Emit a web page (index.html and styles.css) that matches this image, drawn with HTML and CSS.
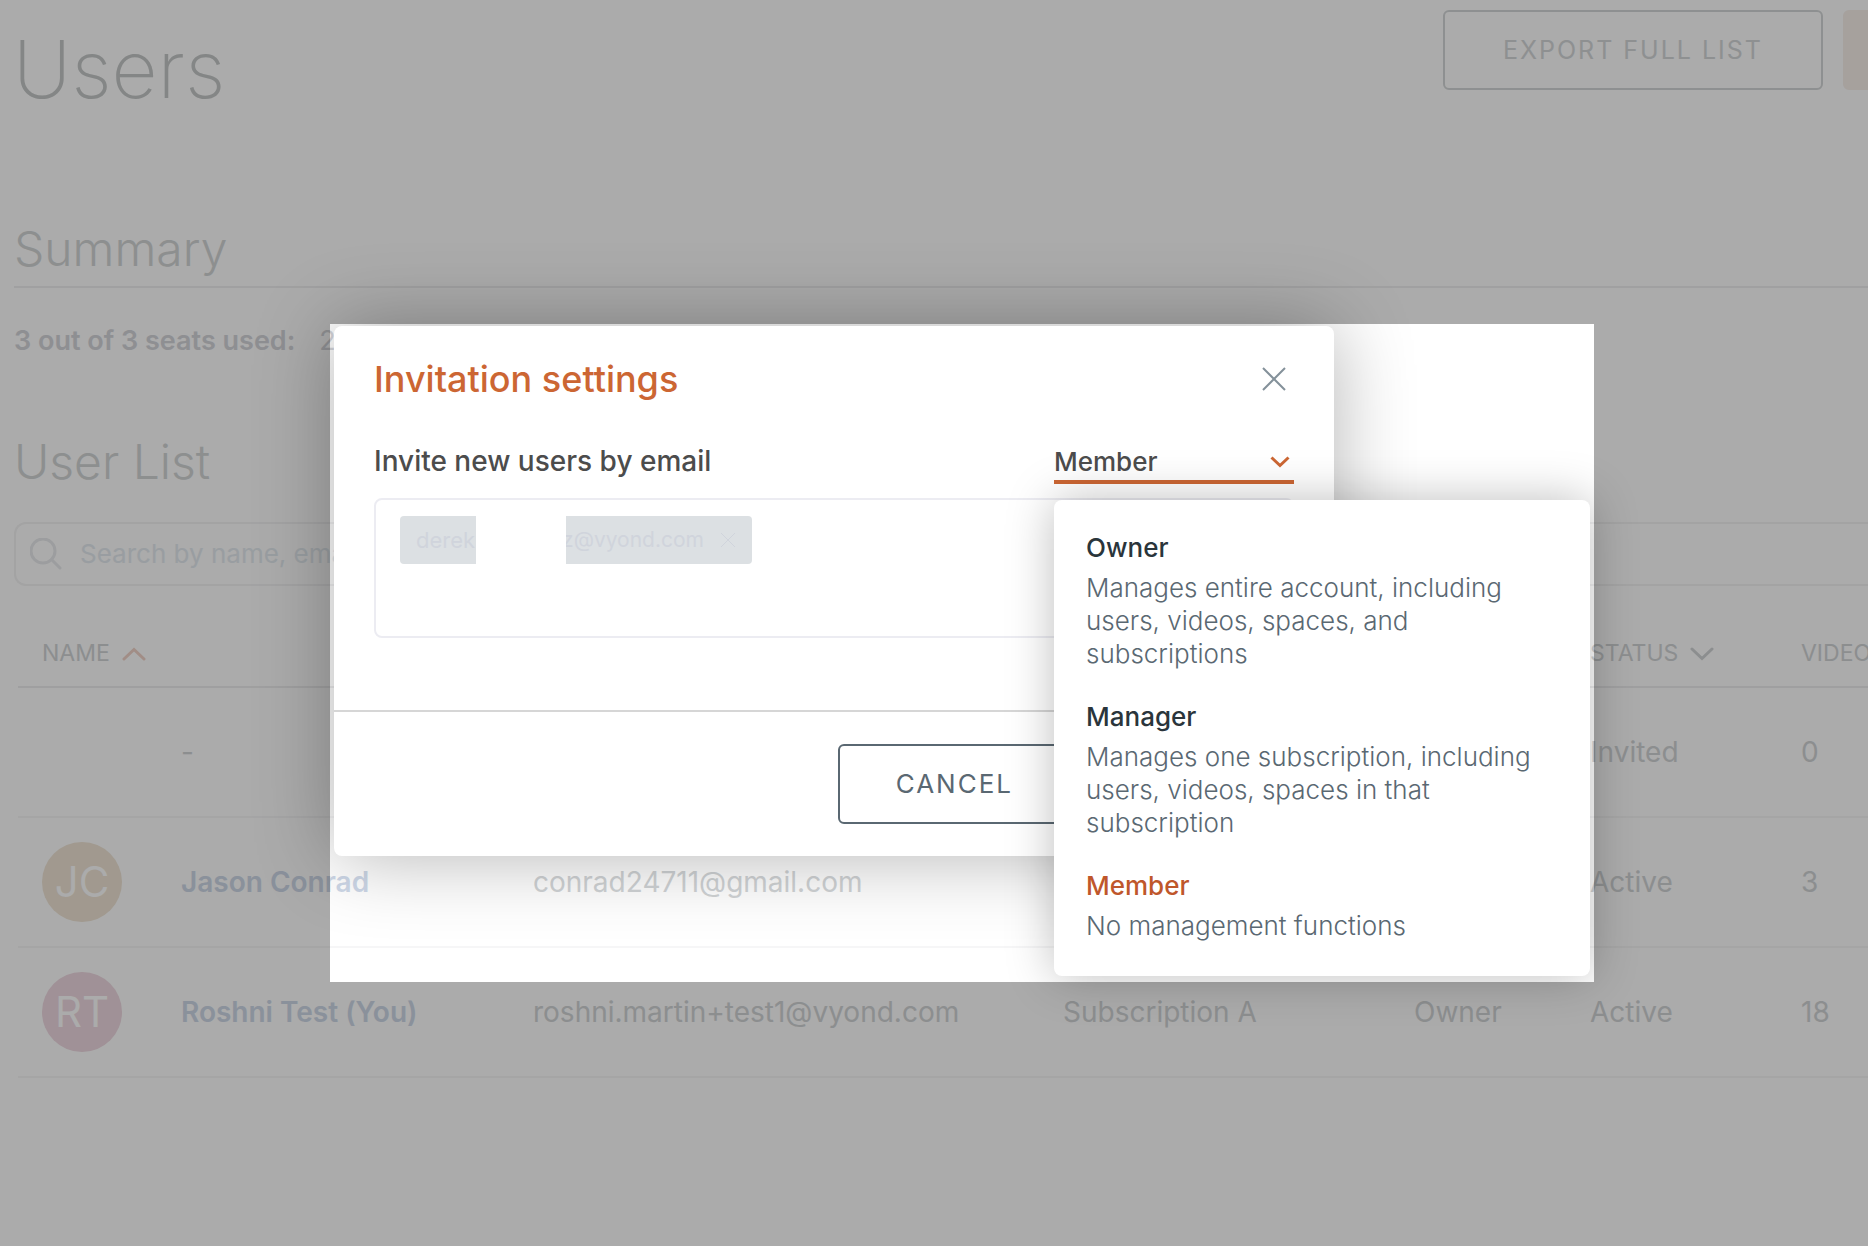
FILE: index.html
```html
<!DOCTYPE html>
<html lang="en">
<head>
<meta charset="utf-8">
<title>Users</title>
<link rel="stylesheet" href="styles.css">
</head>
<body>
<div class="page">
  <header class="header">
    <h1 class="title">Users</h1>
    <div class="actions">
      <button class="btn btn-muted" type="button">EXPORT FULL LIST</button>
      <button class="btn btn-accent" type="button" aria-label="Invite"></button>
    </div>
  </header>

  <main class="main">
    <h2 class="heading heading-ruled">Summary</h2>
    <p class="seats"><strong>3 out of 3 seats used:</strong><span>2</span></p>

    <h2 class="heading">User List</h2>
    <label class="search">
      <svg class="search-icon" viewBox="0 0 32 32" aria-hidden="true"><circle cx="13" cy="13" r="12"/><path d="M21.500 21.500 30 30"/></svg>
      <input class="search-input" type="search" placeholder="Search by name, email" aria-label="Search">
    </label>

    <table class="users">
      <colgroup><col class="col-name"><col class="col-email"><col class="col-plan"><col class="col-role"><col class="col-status"><col></colgroup>
      <thead>
        <tr>
          <th class="th-name">NAME<svg class="sort sort-on" viewBox="0 0 24 14" aria-hidden="true"><path d="M2 12 12 2.500 22 12"/></svg></th>
          <th></th><th></th><th></th>
          <th>STATUS<svg class="sort" viewBox="0 0 24 14" aria-hidden="true"><path d="M2 2 12 11.500 22 2"/></svg></th>
          <th>VIDEOS</th>
        </tr>
      </thead>
      <tbody>
        <tr>
          <td><div class="person"><span class="avatar"></span><span>-</span></div></td>
          <td></td><td></td><td></td><td>Invited</td><td>0</td>
        </tr>
        <tr>
          <td><div class="person"><span class="avatar avatar-sand">JC</span><a class="name" href="#jason">Jason Conrad</a></div></td>
          <td>conrad24711@gmail.com</td><td></td><td></td><td>Active</td><td>3</td>
        </tr>
        <tr>
          <td><div class="person"><span class="avatar avatar-pink">RT</span><a class="name" href="#roshni">Roshni Test (You)</a></div></td>
          <td>roshni.martin+test1@vyond.com</td><td>Subscription A</td><td>Owner</td><td>Active</td><td>18</td>
        </tr>
      </tbody>
    </table>
  </main>

  <section class="modal" role="dialog" aria-labelledby="modal-title">
    <div class="modal-head">
      <h2 class="modal-title" id="modal-title">Invitation settings</h2>
      <button class="close" type="button" aria-label="Close"><svg viewBox="0 0 24 24" aria-hidden="true"><path d="M1 1 23 23M23 1 1 23"/></svg></button>
    </div>
    <div class="modal-body">
      <div class="invite-row">
        <span class="invite-label" id="invite-label">Invite new users by email</span>
        <div class="role">
          <select class="role-select" aria-label="Role">
            <option>Owner</option>
            <option>Manager</option>
            <option selected>Member</option>
          </select>
          <svg class="role-arrow" viewBox="0 0 20 12" aria-hidden="true"><path d="M1.500 1.500 10 9.500 18.500 1.500"/></svg>
          <ul class="menu">
            <li><strong class="menu-name">Owner</strong><p class="menu-text">Manages entire account, including users, videos, spaces, and subscriptions</p></li>
            <li><strong class="menu-name">Manager</strong><p class="menu-text">Manages one subscription, including users, videos, spaces in that subscription</p></li>
            <li><strong class="menu-name menu-name-on">Member</strong><p class="menu-text">No management functions</p></li>
          </ul>
        </div>
      </div>
      <div class="emails" role="group" aria-labelledby="invite-label">
        <div class="chip">
          <span class="chip-start">derek</span>
          <span class="chip-end"><span>z@vyond.com</span><button class="chip-remove" type="button" aria-label="Remove"><svg viewBox="0 0 16 16" aria-hidden="true"><path d="M1 1 15 15M15 1 1 15"/></svg></button></span>
        </div>
      </div>
    </div>
    <footer class="modal-foot">
      <button class="btn" type="button">CANCEL</button>
    </footer>
  </section>

  <div class="spotlight"></div>
</div>
</body>
</html>
```
FILE: styles.css
```css
* { box-sizing: border-box; }

body {
  margin: 0;
  background: #fff;
  color: #d1d4d6;
  font-family: Inter, "Liberation Sans", sans-serif;
  font-size: 28px;
  line-height: 32px;
}

h1, h2, p, ul { margin: 0; padding: 0; }
button, input, select { font: inherit; color: inherit; }
button { cursor: pointer; }
svg { fill: none; stroke: currentColor; display: block; }

.page {
  position: relative;
  min-height: 100vh;
  overflow: hidden;
}

/* Page header */
.header {
  display: flex;
  justify-content: space-between;
  align-items: flex-start;
  height: 216px;
  padding: 10px 0 0 13px;
}
.title {
  padding-top: 11px;
  color: #c5c8c8;
  font-size: 80px;
  font-weight: 200;
  line-height: 96px;
}
.actions {
  display: flex;
  gap: 20px;
  margin-right: -215px;
}
.btn {
  height: 80px;
  padding: 0 56px;
  background: none;
  border: 2px solid #5a6872;
  border-radius: 6px;
  color: #5a6872;
  font-size: 26px;
  letter-spacing: 2px;
  white-space: nowrap;
}
.btn-muted { border-color: #d4d7d8; color: #d4d7d9; font-size: 25px; padding: 0 58px; }
.btn-accent { width: 240px; background: #f8f0eb; border-color: #f8f0eb; }

/* Summary and list */
.main { padding-left: 14px; }
.heading {
  height: 72px;
  color: #d2d5d6;
  font-size: 48px;
  font-weight: 300;
  line-height: 66px;
}
.heading-ruled { border-bottom: 2px solid #efeff0; }
.seats {
  display: flex;
  gap: 24px;
  padding: 37px 0 72px;
  color: #d4d5da;
  font-size: 27px;
}
.seats strong { font-weight: 600; }

.search {
  display: flex;
  align-items: center;
  gap: 18px;
  height: 64px;
  margin: 21px -14px 34px 0;
  padding-left: 14px;
  border: 2px solid #f3f3f4;
  border-right: 0;
  border-radius: 12px 0 0 12px;
}
.search-icon { width: 32px; height: 32px; color: #e9ebed; stroke-width: 3; stroke-linecap: round; }
.search-input {
  flex: 1;
  padding: 0;
  border: 0;
  background: none;
  font-size: 26px;
}
.search-input::placeholder { color: #e4ebf0; opacity: 1; }

.users {
  width: calc(100% - 4px);
  margin-left: 4px;
  border-collapse: separate;
  border-spacing: 0;
  table-layout: fixed;
  white-space: nowrap;
}
.col-name { width: 515px; }
.col-email { width: 530px; }
.col-plan { width: 351px; }
.col-role { width: 176px; }
.col-status { width: 211px; }
.users th {
  height: 68px;
  padding: 0;
  border-bottom: 2px solid #eeeeef;
  font-size: 23px;
  font-weight: 400;
  text-align: left;
}
.users .th-name { padding-left: 24px; }
.users td {
  height: 130px;
  padding: 0;
  border-bottom: 2px solid #f6f6f7;
}
.sort {
  display: inline-block;
  width: 24px;
  height: 14px;
  margin-left: 12px;
  stroke-width: 3;
  stroke-linecap: round;
}
.sort-on { color: #f0d3c8; }
.person {
  display: flex;
  align-items: center;
  gap: 59px;
  padding-left: 24px;
}
.avatar {
  width: 80px;
  height: 80px;
  border-radius: 50%;
  color: #fff;
  font-size: 42px;
  line-height: 80px;
  text-align: center;
}
.avatar-sand { background: #f0e5d5; }
.avatar-pink { background: #efd8e1; }
.name { color: #ced8e8; font-weight: 600; text-decoration: none; }

/* Invitation dialog */
.modal {
  position: absolute;
  top: 326px;
  left: 334px;
  width: 1000px;
  background: #fff;
  border-radius: 8px;
  box-shadow: 0 0 80px rgba(0, 0, 0, .3);
  color: #4c4c4c;
}
.modal-head {
  display: flex;
  justify-content: space-between;
  align-items: center;
  padding: 33px 48px 23px 40px;
}
.modal-title { color: #cc6633; font-size: 36px; font-weight: 500; line-height: 40px; }
.close { padding: 0; border: 0; background: none; color: #84919a; }
.close svg { width: 24px; height: 24px; stroke-width: 2; }
.modal-body { padding: 16px 40px 72px; }
.invite-row {
  display: flex;
  justify-content: space-between;
  align-items: flex-start;
  margin-bottom: 14px;
}
.invite-label { padding-top: 7px; font-weight: 500; }
.role { position: relative; width: 240px; }
.role-select {
  display: block;
  width: 100%;
  height: 46px;
  padding: 5px 0 0;
  border: 0;
  border-bottom: 4px solid #cc6633;
  border-radius: 0;
  background: none;
  appearance: none;
  font-size: 26px;
  font-weight: 500;
}
.role-arrow {
  position: absolute;
  top: 18px;
  right: 4px;
  width: 20px;
  height: 12px;
  color: #cc6633;
  stroke-width: 3;
}
.emails {
  height: 140px;
  padding: 16px 24px;
  border: 2px solid #ececf2;
  border-radius: 8px;
}
.chip {
  display: flex;
  gap: 90px;
  width: 352px;
  height: 48px;
  color: #d0d4dc;
  font-size: 22px;
  line-height: 48px;
}
.chip-start {
  width: 76px;
  padding-left: 16px;
  overflow: hidden;
  background: #dce0e3;
  border-radius: 4px 0 0 4px;
}
.chip-end {
  display: flex;
  flex: 1;
  justify-content: flex-end;
  align-items: center;
  gap: 16px;
  padding-right: 16px;
  overflow: hidden;
  background: #dce0e3;
  border-radius: 0 4px 4px 0;
  font-size: 21px;
}
.chip-remove { padding: 0; border: 0; background: none; }
.chip-remove svg { width: 16px; height: 16px; }
.modal-foot {
  display: flex;
  justify-content: flex-end;
  padding: 32px 263px 32px 40px;
  border-top: 2px solid #d6d6d6;
}

/* Role menu */
.menu {
  position: absolute;
  top: 62px;
  left: 0;
  z-index: 1;
  display: grid;
  gap: 31px;
  width: 536px;
  padding: 32px 32px 34px;
  background: #fff;
  border-radius: 8px;
  box-shadow: 0 0 48px rgba(0, 0, 0, .26);
  color: #5a6872;
  font-size: 26px;
  list-style: none;
}
.menu-name { display: block; margin-bottom: 7px; color: #2a353b; font-weight: 500; }
.menu-name-on { color: #bf572b; }
.menu-text { font-weight: 300; line-height: 33px; }

/* Everything outside this area is dimmed */
.spotlight {
  position: absolute;
  top: 324px;
  left: 330px;
  width: 1264px;
  height: 658px;
  box-shadow: 0 0 0 200vmax rgba(0, 0, 0, .33);
  pointer-events: none;
}
```
